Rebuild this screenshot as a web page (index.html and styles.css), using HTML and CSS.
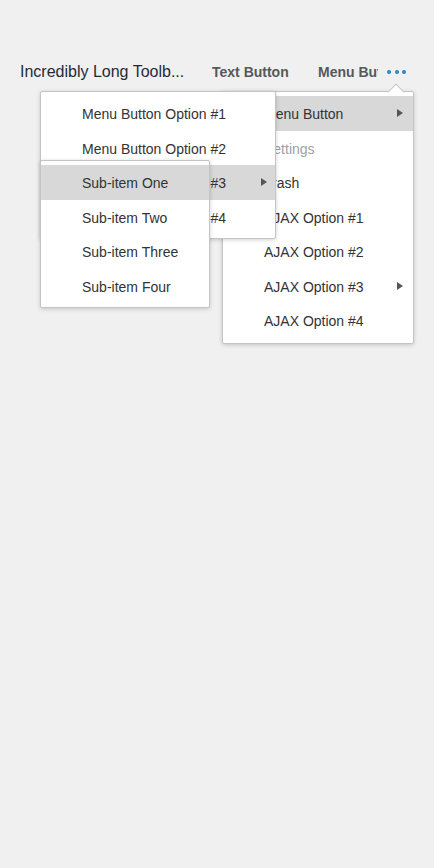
FILE: index.html
```html
<!DOCTYPE html>
<html>
<head>
<meta charset="utf-8">
<link rel="stylesheet" href="styles.css">
</head>
<body>
<div class="page">
  <div class="toolbar">
    <div class="title">Incredibly Long Toolb...</div>
    <div class="tb-btn text-btn">Text Button</div>
    <div class="tb-btn menu-btn"><span>Menu Button</span></div>
    <div class="more"><i></i><i></i><i></i></div>
  </div>

  <div class="menu menu-main">
    <div class="notch"></div>
    <div class="item active">Menu Button<span class="arrow"></span></div>
    <div class="item disabled">Settings</div>
    <div class="item">Trash</div>
    <div class="item">AJAX Option #1</div>
    <div class="item">AJAX Option #2</div>
    <div class="item">AJAX Option #3<span class="arrow"></span></div>
    <div class="item">AJAX Option #4</div>
  </div>

  <div class="menu menu-sub1">
    <div class="item">Menu Button Option #1</div>
    <div class="item">Menu Button Option #2</div>
    <div class="item active">Menu Button Option #3<span class="arrow"></span></div>
    <div class="item">Menu Button Option #4</div>
  </div>

  <div class="menu menu-sub2">
    <div class="item active">Sub-item One</div>
    <div class="item">Sub-item Two</div>
    <div class="item">Sub-item Three</div>
    <div class="item">Sub-item Four</div>
  </div>
</div>
</body>
</html>
```
FILE: styles.css
```css
html, body {
  margin: 0;
  padding: 0;
  background: #f0f0f0;
  font-family: "Liberation Sans", Arial, sans-serif;
}
.page {
  position: relative;
  width: 434px;
  height: 868px;
}
.toolbar {
  display: flex;
  align-items: center;
  height: 40px;
  padding: 52px 0 0 20px;
}
.title {
  font-size: 16px;
  color: #1f2a38;
  width: 192px;
  white-space: nowrap;
}
.tb-btn {
  font-size: 14px;
  font-weight: bold;
  color: #585858;
  white-space: nowrap;
}
.text-btn {
  width: 106px;
}
.menu-btn {
  width: 60px;
  overflow: hidden;
}
.more {
  display: flex;
  gap: 3.5px;
  margin-left: 9px;
  padding-bottom: 1px;
}
.more i {
  display: block;
  width: 4px;
  height: 4px;
  border-radius: 50%;
  background: #2b86c5;
}
.menu {
  position: absolute;
  background: #fff;
  border: 1px solid #c4c4c4;
  border-radius: 2px;
  box-shadow: 0 1px 4px rgba(0,0,0,0.18);
  padding: 4px 0;
  box-sizing: border-box;
}
.menu-main {
  left: 222px;
  top: 91px;
  width: 192px;
  height: 253px;
}
.menu-sub1 {
  left: 40px;
  top: 91px;
  width: 236px;
  height: 148px;
}
.menu-sub2 {
  left: 40px;
  top: 160px;
  width: 170px;
  height: 148px;
}
.item {
  position: relative;
  height: 34.5px;
  line-height: 36px;
  padding-left: 41px;
  font-size: 14px;
  color: #333;
  white-space: nowrap;
  overflow: visible;
}
.item.active {
  background: #d8d8d8;
}
.item.disabled {
  color: #a0a0a0;
}
.arrow {
  position: absolute;
  right: 10px;
  top: 13px;
  width: 0;
  height: 0;
  border-top: 4.5px solid transparent;
  border-bottom: 4.5px solid transparent;
  border-left: 6px solid #555;
}
.menu-sub1 .arrow {
  right: 8px;
}
.notch {
  position: absolute;
  left: 167px;
  top: -6px;
  width: 11px;
  height: 11px;
  background: #fff;
  border-left: 1px solid #c4c4c4;
  border-top: 1px solid #c4c4c4;
  transform: rotate(45deg);
}
```
